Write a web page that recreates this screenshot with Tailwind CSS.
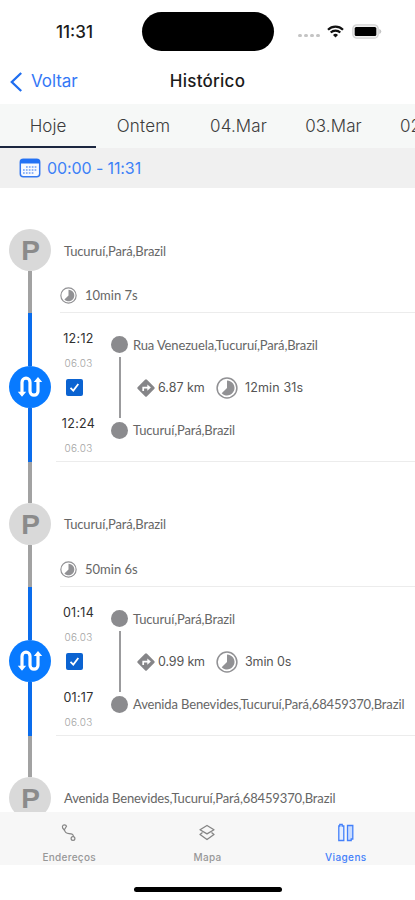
<!DOCTYPE html>
<html lang="pt">
<head>
<meta charset="utf-8">
<title>Histórico</title>
<script src="https://cdn.jsdelivr.net/npm/@tailwindcss/browser@4"></script>
</head>
<body class="bg-white">
<svg class="hidden">
  <symbol id="clock" viewBox="0 0 22 22"><circle cx="11" cy="11" r="9.9" fill="#fff" stroke="#919194" stroke-width="1.5"/><path d="M11 3.5a7.5 7.5 0 1 1-5.3 12.8L11 11Z" fill="#919194"/></symbol>
  <symbol id="turn" viewBox="0 0 18 18"><path d="M8 .8a1.4 1.4 0 0 1 2 0L17.200 8a1.400 1.400 0 0 1 0 2L10 17.200a1.400 1.400 0 0 1-2 0L.8 10a1.400 1.400 0 0 1 0-2Z" fill="#858588"/><path d="M6.200 12V8.600h5" fill="none" stroke="#fff" stroke-width="1.700"/><path d="m10.300 5.400 3.600 3.200-3.600 3.200Z" fill="#fff"/></symbol>
  <symbol id="route" viewBox="0 0 26 22"><path d="M5 16.500V6.200a4 4 0 0 1 8 0v9a4 4 0 0 0 8 0V5" fill="none" stroke="#fff" stroke-width="3.200"/><path d="M.8 15.800h8.400L5 20.800ZM16.800 6h8.400L21 1Z" fill="#fff"/></symbol>
  <symbol id="check" viewBox="0 0 17 17"><rect width="17" height="17" rx="2" fill="#0b63d1"/><path d="m4.500 8.800 2.800 2.800 5-6.600" fill="none" stroke="#fff" stroke-width="1.800"/></symbol>
</svg>
<div class="w-[415px] h-[900px] overflow-hidden flex flex-col bg-white font-['Inter',sans-serif]">
  <div class="h-[62px] shrink-0 flex items-center">
    <div class="w-[142px] pl-[56px] pt-[3px] text-[17px] font-medium text-[#1c1c1c] whitespace-nowrap">11:31</div>
    <div class="w-[132px] h-[39px] mt-[1px] rounded-full bg-black"></div>
    <div class="ml-[24px] mt-[9px] w-[22px] flex gap-[2.500px]">
      <i class="size-[3.500px] rounded-full bg-[#c4c4c4]"></i><i class="size-[3.500px] rounded-full bg-[#c4c4c4]"></i><i class="size-[3.500px] rounded-full bg-[#c4c4c4]"></i><i class="size-[3.500px] rounded-full bg-[#c4c4c4]"></i>
    </div>
    <svg class="ml-[7px] w-[17px] h-[13px]" viewBox="0 0 17 13" fill="none" stroke="#111" stroke-width="2.200"><path d="M1 4.700a10.700 10.700 0 0 1 15 0M3.700 7.500a6.900 6.900 0 0 1 9.600 0"/><path d="M8.500 12.500 6 9.900a3.600 3.600 0 0 1 5 0Z" fill="#111" stroke="none"/></svg>
    <svg class="ml-[8px] w-[30px] h-[15px]" viewBox="0 0 30 15"><rect x=".8" y=".8" width="25.400" height="13.400" rx="4" fill="#f0f0f0" stroke="#d4d4d4" stroke-width="1.300"/><rect x="2.700" y="2.900" width="21.600" height="9.200" rx="1.500" fill="#000"/><path d="M27.300 5v5q2-.8 2-2.500t-2-2.500" fill="#c4c4c4"/></svg>
  </div>
  <div class="h-[42px] shrink-0 grid grid-cols-[120px_1fr_120px] items-center pb-[3px] text-[17px]">
    <div class="flex items-center text-[#3478f6] pl-[10px]">
      <svg class="w-[13px] h-[20px]" viewBox="0 0 13 20"><path d="M11.200 1 1.800 10l9.400 9" fill="none" stroke="#1f6ef0" stroke-width="2.300"/></svg>
      <span class="ml-[8px] tracking-[-0.05px]">Voltar</span>
    </div>
    <div class="text-center font-medium text-[#1b1b1b] tracking-[0.25px]">Histórico</div>
  </div>
  <div class="h-[44px] shrink-0 flex bg-[#f6f8f7] overflow-hidden text-[17px] text-[#3c3c3c] font-light whitespace-nowrap">
    <div class="w-[96px] shrink-0 border-b-2 border-[#1c2740] flex items-center justify-center pt-[4px]">Hoje</div>
    <div class="w-[95px] shrink-0 flex items-center justify-center pt-[2px] tracking-[0.2px]">Ontem</div>
    <div class="w-[95px] shrink-0 flex items-center justify-center pt-[2px] tracking-[0.1px]">04.Mar</div>
    <div class="w-[95px] shrink-0 flex items-center justify-center pt-[2px] tracking-[0.1px]">03.Mar</div>
    <div class="w-[95px] shrink-0 flex items-center justify-center pt-[2px] tracking-[0.1px]">02.Mar</div>
  </div>
  <div class="h-[40px] shrink-0 flex items-center pl-[19px] bg-[#f0f0f0] text-[16px] text-[#3d81f7]">
    <svg class="w-[22px] h-[20px]" viewBox="0 0 22 20"><rect x="1.300" y="1.300" width="19.400" height="17.400" rx="3" fill="#f8faff" stroke="#3478f0" stroke-width="1.500"/><path d="M1 5.500V4a3 3 0 0 1 3-3h14a3 3 0 0 1 3 3v1.500Z" fill="#2372f5"/><path d="M7 9h11M4 12h14M4 15h11" stroke="#6e9ff6" stroke-width="1.400" stroke-dasharray="1.700 1.200"/></svg>
    <span class="ml-[6px] tracking-[-0.1px]">00:00 - 11:31</span>
  </div>

  <div class="h-[624px] shrink-0 overflow-hidden">
    <div class="h-[125px] flex">
      <div class="w-[60px] flex flex-col items-center">
        <div class="h-[41px]"></div>
        <div class="size-[42px] shrink-0 rounded-full bg-[#d9d9d9] flex items-center justify-center pt-[2px] pl-[1px] font-['Liberation_Sans',sans-serif] font-bold text-[28px] text-[#8b8b8b]">P</div>
        <div class="w-[4px] flex-1 bg-[#a2a2a2]"></div>
      </div>
      <div class="flex-1 border-b border-[#ececec] font-['Lato',sans-serif] text-[13px] whitespace-nowrap text-[#666]">
        <div class="pl-[4px] pt-[53px] leading-[20px] tracking-[-0.14px]">Tucuruí,Pará,Brazil</div>
        <div class="mt-[25px] h-[20px] flex items-center"><svg class="mb-[2px] size-[17px]"><use href="#clock"/></svg><span class="ml-[8px] text-[13px]">10min 7s</span></div>
      </div>
    </div>
    <div class="h-[149px] flex">
      <div class="w-[56px] pl-[9px]">
        <div class="w-[42px] h-full flex flex-col items-center">
          <div class="w-[4px] h-[53px] bg-[#0a6cec]"></div>
          <div class="size-[42px] shrink-0 rounded-full bg-[#087aff] flex items-center justify-center"><svg class="w-[26px] h-[22px]"><use href="#route"/></svg></div>
          <div class="w-[4px] flex-1 bg-[#0a6cec]"></div>
        </div>
      </div>
      <div class="flex-1 flex border-b border-[#ececec]">
        <div class="w-[45px] flex flex-col items-center pt-[17px] text-[12.500px] leading-[18px] tracking-[0.3px] text-[#303030]">
          <div>12:12</div>
          <div class="mt-[6px] text-[10px] font-light text-[#a4a4a4]">06.03</div>
          <svg class="mt-[7px] mr-[9px] size-[17px] shrink-0"><use href="#check"/></svg>
          <div class="mt-[19px]">12:24</div>
          <div class="mt-[6px] text-[10px] font-light text-[#a4a4a4]">06.03</div>
        </div>
        <div class="ml-[10px] pt-[23px] w-[17px] flex flex-col items-center">
          <div class="size-[17px] rounded-full bg-[#8b8b8e]"></div>
          <div class="my-[4px] w-[2px] h-[61px] bg-[#9b9b9d]"></div>
          <div class="size-[17px] rounded-full bg-[#8b8b8e]"></div>
        </div>
        <div class="ml-[5px] pt-[22px] whitespace-nowrap font-['Lato',sans-serif] text-[13px] leading-[20px] tracking-[-0.14px] text-[#666]">
          <div>Rua Venezuela,Tucuruí,Pará,Brazil</div>
          <div class="mt-[22px] mb-[21px] h-[22px] pl-[4px] flex items-center font-['Inter',sans-serif] text-[12.500px] text-[#555]">
            <svg class="size-[18px]"><use href="#turn"/></svg><span class="ml-[3px] w-[58px] tracking-normal">6.87 km</span>
            <svg class="size-[22px]"><use href="#clock"/></svg><span class="ml-[7px] tracking-[0.15px]">12min 31s</span>
          </div>
          <div>Tucuruí,Pará,Brazil</div>
        </div>
      </div>
    </div>

    <div class="h-[125px] flex">
      <div class="w-[60px] flex flex-col items-center">
        <div class="w-[4px] h-[41px] bg-[#a2a2a2]"></div>
        <div class="size-[42px] shrink-0 rounded-full bg-[#d9d9d9] flex items-center justify-center pt-[2px] pl-[1px] font-['Liberation_Sans',sans-serif] font-bold text-[28px] text-[#8b8b8b]">P</div>
        <div class="w-[4px] flex-1 bg-[#a2a2a2]"></div>
      </div>
      <div class="flex-1 border-b border-[#ececec] font-['Lato',sans-serif] text-[13px] whitespace-nowrap text-[#666]">
        <div class="pl-[4px] pt-[52px] leading-[20px] tracking-[-0.14px]">Tucuruí,Pará,Brazil</div>
        <div class="mt-[26px] h-[20px] flex items-center"><svg class="mb-[2px] size-[17px]"><use href="#clock"/></svg><span class="ml-[8px] text-[13px]">50min 6s</span></div>
      </div>
    </div>
    <div class="h-[149px] flex">
      <div class="w-[56px] pl-[9px]">
        <div class="w-[42px] h-full flex flex-col items-center">
          <div class="w-[4px] h-[53px] bg-[#0a6cec]"></div>
          <div class="size-[42px] shrink-0 rounded-full bg-[#087aff] flex items-center justify-center"><svg class="w-[26px] h-[22px]"><use href="#route"/></svg></div>
          <div class="w-[4px] flex-1 bg-[#0a6cec]"></div>
        </div>
      </div>
      <div class="flex-1 flex border-b border-[#ececec]">
        <div class="w-[45px] flex flex-col items-center pt-[17px] text-[12.500px] leading-[18px] tracking-[0.3px] text-[#303030]">
          <div>01:14</div>
          <div class="mt-[6px] text-[10px] font-light text-[#a4a4a4]">06.03</div>
          <svg class="mt-[7px] mr-[9px] size-[17px] shrink-0"><use href="#check"/></svg>
          <div class="mt-[19px]">01:17</div>
          <div class="mt-[6px] text-[10px] font-light text-[#a4a4a4]">06.03</div>
        </div>
        <div class="ml-[10px] pt-[23px] w-[17px] flex flex-col items-center">
          <div class="size-[17px] rounded-full bg-[#8b8b8e]"></div>
          <div class="my-[4px] w-[2px] h-[61px] bg-[#9b9b9d]"></div>
          <div class="size-[17px] rounded-full bg-[#8b8b8e]"></div>
        </div>
        <div class="ml-[5px] pt-[22px] whitespace-nowrap font-['Lato',sans-serif] text-[13px] leading-[20px] tracking-[-0.14px] text-[#666]">
          <div>Tucuruí,Pará,Brazil</div>
          <div class="mt-[22px] mb-[21px] h-[22px] pl-[4px] flex items-center font-['Inter',sans-serif] text-[12.500px] text-[#555]">
            <svg class="size-[18px]"><use href="#turn"/></svg><span class="ml-[3px] w-[58px] tracking-[-0.14px]">0.99 km</span>
            <svg class="size-[22px]"><use href="#clock"/></svg><span class="ml-[7px] tracking-[-0.14px]">3min 0s</span>
          </div>
          <div>Avenida Benevides,Tucuruí,Pará,68459370,Brazil</div>
        </div>
      </div>
    </div>

    <div class="h-[125px] flex">
      <div class="w-[60px] flex flex-col items-center">
        <div class="w-[4px] h-[41px] bg-[#a2a2a2]"></div>
        <div class="size-[42px] shrink-0 rounded-full bg-[#d9d9d9] flex items-center justify-center pt-[2px] pl-[1px] font-['Liberation_Sans',sans-serif] font-bold text-[28px] text-[#8b8b8b]">P</div>
      </div>
      <div class="flex-1 font-['Lato',sans-serif] text-[13px] whitespace-nowrap text-[#666]">
        <div class="pl-[4px] pt-[52px] leading-[20px] tracking-[-0.14px]">Avenida Benevides,Tucuruí,Pará,68459370,Brazil</div>
      </div>
    </div>
  </div>

  <div class="h-[53px] shrink-0 grid grid-cols-3 bg-[#f7f7f7] text-[10px] leading-[14px] font-medium text-[#979797]">
    <div class="flex flex-col items-center pt-[11px]">
      <svg class="size-[20px]" viewBox="0 0 20 20" fill="none" stroke="#858585" stroke-width="1.200"><path d="M7.500 3.200 5.200 7Q3 4.700 3.400 3.300C4 1.300 6.900 1.300 7.500 3.200Z"/><path d="M5.500 7c.6 3 2 3.500 4.500 3.600 3 .1 4.500.8 4.400 3"/><circle cx="14" cy="15.500" r="1.900"/></svg>
      <span class="mt-[7px] tracking-[0.3px]">Endereços</span>
    </div>
    <div class="flex flex-col items-center pt-[11px]">
      <svg class="size-[20px]" viewBox="0 0 20 20" fill="none" stroke="#858585" stroke-width="1.300" stroke-linejoin="round"><path d="m10 2.500 7 4.200-7 4.200-7-4.200ZM5.500 9.500 3 11.500l7 5 7-5-2.500-2"/></svg>
      <span class="mt-[7px] tracking-[0.3px]">Mapa</span>
    </div>
    <div class="flex flex-col items-center pt-[11px] text-[#4380fa]">
      <svg class="size-[20px]" viewBox="0 0 20 20" fill="#e5eeff" stroke="#4380fa" stroke-width="1.300"><path d="M2.800 3h1V1.500h2.400V3h1.600v14.500h-5Z"/><path fill="#c9dcff" d="M11.500 2.500h5.300V16h-1.600v1.500h-3.700Z"/></svg>
      <span class="mt-[7px] tracking-[0.4px]">Viagens</span>
    </div>
  </div>
  <div class="flex-1 flex justify-center pt-[22px]"><div class="w-[148px] h-[5px] rounded-full bg-black"></div></div>
</div>
</body>
</html>
